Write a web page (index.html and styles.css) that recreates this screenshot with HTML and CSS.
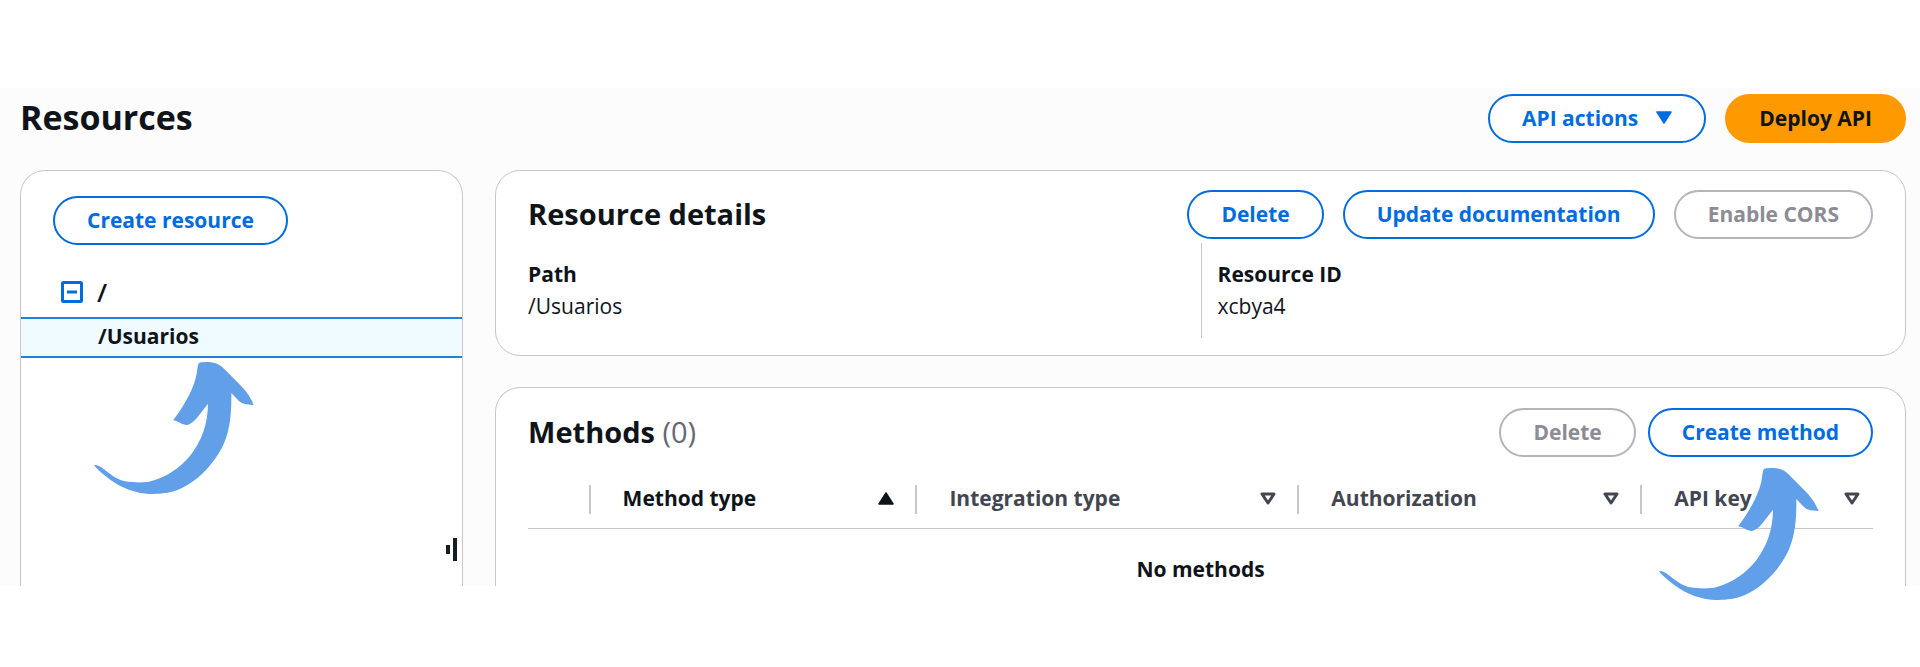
FILE: index.html
```html
<!DOCTYPE html>
<html lang="en">
<head>
<meta charset="utf-8">
<title>Resources</title>
<link rel="stylesheet" href="styles.css">
</head>
<body>
<svg class="defs" width="0" height="0" aria-hidden="true">
  <symbol id="arrow" viewBox="42 36 480 396">
    <path d="M356 40Q360 36 378 36C400 36 415 40 432 56L490 115Q511 139 521 165L497 163Q486 162 476 152L454 129C455 200 448 250 425 295C395 350 350 395 300 417C265 432 225 433 200 431C150 427 110 405 80 381Q50 358 42 346Q50 342 66 353C90 372 110 388 135 394C165 398 195 399 215 393C260 380 300 355 332 315C365 270 383 225 384 161L350 205Q335 222 321 225Q310 226 297 217Q288 212 280 211Q280 209 286 202C315 162 345 110 351 65Q353 47 356 40Z"/>
  </symbol>
  <symbol id="sort" viewBox="0 0 16 13">
    <path d="M2 2H14L8 11Z" fill="none" stroke="currentColor" stroke-width="3" stroke-linejoin="round"/>
  </symbol>
  <symbol id="caret" viewBox="0 0 16 13">
    <path d="M1 1H15L8 12Z" fill="currentColor" stroke="currentColor" stroke-width="1.5" stroke-linejoin="round"/>
  </symbol>
</svg>
<main class="console">
  <header class="bar">
    <h1 class="title">Resources</h1>
    <div class="actions">
      <button class="btn" type="button">API actions <svg class="caret"><use href="#caret"/></svg></button>
      <button class="btn primary" type="button">Deploy API</button>
    </div>
  </header>
  <div class="columns">
    <nav class="card open side" aria-label="Resources">
      <div class="side-head"><button class="btn" type="button">Create resource</button></div>
      <div class="node">
        <button class="toggle" type="button" aria-label="Collapse">
          <svg width="22" height="22" viewBox="0 0 22 22" fill="none" stroke="currentColor" stroke-width="3"><rect x="1.5" y="1.5" width="19" height="19" rx="1"/><path d="M6 11H16"/></svg>
        </button>
        <a class="link root" href="#root">/</a>
      </div>
      <div class="node selected">
        <a class="link" href="#usuarios">/Usuarios</a>
        <svg class="arrow arrow-node" aria-hidden="true"><use href="#arrow"/></svg>
      </div>
      <div class="grip"><svg width="11" height="23" viewBox="0 0 11 23" fill="#161d26"><rect y="7" width="4" height="9"/><rect x="7" width="4" height="23"/></svg></div>
    </nav>
    <div class="content">
      <section class="card details">
        <div class="card-head">
          <h2 class="heading">Resource details</h2>
          <div class="actions">
            <button class="btn" type="button">Delete</button>
            <button class="btn" type="button">Update documentation</button>
            <button class="btn" type="button" disabled>Enable CORS</button>
          </div>
        </div>
        <dl class="pairs">
          <div class="pair"><dt>Path</dt><dd>/Usuarios</dd></div>
          <div class="pair"><dt>Resource ID</dt><dd>xcbya4</dd></div>
        </dl>
      </section>
      <section class="card open methods">
        <div class="card-head">
          <h2 class="heading">Methods <span class="count">(0)</span></h2>
          <div class="actions tight">
            <button class="btn" type="button" disabled>Delete</button>
            <div class="marked">
              <button class="btn" type="button">Create method</button>
              <svg class="arrow arrow-method" aria-hidden="true"><use href="#arrow"/></svg>
            </div>
          </div>
        </div>
        <table class="table">
          <colgroup><col class="c-select"><col class="c-method"><col class="c-integration"><col class="c-auth"><col></colgroup>
          <thead>
            <tr>
              <td></td>
              <th scope="col"><button class="sort active" type="button">Method type <svg class="caret up"><use href="#caret"/></svg></button></th>
              <th scope="col"><button class="sort" type="button">Integration type <svg class="caret"><use href="#sort"/></svg></button></th>
              <th scope="col"><button class="sort" type="button">Authorization <svg class="caret"><use href="#sort"/></svg></button></th>
              <th scope="col"><button class="sort last" type="button">API key <svg class="caret"><use href="#sort"/></svg></button></th>
            </tr>
          </thead>
          <tbody><tr><td class="empty" colspan="5">No methods</td></tr></tbody>
        </table>
      </section>
    </div>
  </div>
</main>
</body>
</html>
```
FILE: styles.css
```css
* { box-sizing: border-box; }
body {
  margin: 0;
  min-height: 100vh;
  padding: 88px 0 81px;
  display: flex;
  flex-direction: column;
  background: #fff;
  color: #0f141a;
  font: 400 21px/32px "Open Sans", "Noto Sans", sans-serif;
}
.defs { position: absolute; }
.console {
  flex: 1;
  display: flex;
  flex-direction: column;
  padding: 6px 14px 0 20px;
  background: #fcfcfd;
}
.bar, .card-head { display: flex; align-items: center; justify-content: space-between; }
.title, .heading { margin: 0; padding-bottom: 2px; font-weight: 700; }
.title { font-size: 34px; line-height: 47px; }
.heading { font-size: 29px; line-height: 40px; }
.count { color: #656871; font-weight: 400; }
.actions { display: flex; gap: 19px; }
.tight { gap: 12px; }
.btn {
  display: flex;
  align-items: center;
  gap: 18px;
  height: 49px;
  padding: 0 32px 2px;
  border: 2px solid #006ce0;
  border-radius: 25px;
  background: #fff;
  color: #006ce0;
  font: 700 21px/32px "Open Sans", "Noto Sans", sans-serif;
  white-space: nowrap;
}
.btn:disabled { border-color: #b4b4bb; color: #8c8c94; }
.primary { border-color: #ff9900; background: #ff9900; color: #0f141a; }
.caret { width: 16px; height: 13px; flex: none; }
.up { transform: rotate(180deg); }
.columns { flex: 1; display: grid; grid-template-columns: 239fr 761fr; gap: 32px; margin-top: 27px; }
.card { border: 1px solid #c6c6cd; border-radius: 25px; background: #fff; }
.open { border-bottom: 0; border-radius: 25px 25px 0 0; }
.side { display: flex; flex-direction: column; }
.side-head { display: flex; padding: 25px 32px 25px; }
.node { position: relative; display: flex; align-items: center; gap: 14px; height: 47px; padding: 0 0 4px 40px; }
.toggle { display: flex; padding: 0; border: 0; background: none; color: #006ce0; }
.link { color: #0f141a; font-size: 21px; font-weight: 700; text-decoration: none; }
.root { font-size: 26px; font-weight: 600; }
.selected { height: 41px; padding: 0 0 4px 77px; border: solid #2080e0; border-width: 2px 0; background: #f0fbff; }
.arrow { position: absolute; z-index: 1; width: 160px; height: 132px; fill: #619fe9; pointer-events: none; }
.arrow-node { left: 73px; top: 43px; }
.grip { display: flex; justify-content: flex-end; margin-top: auto; padding: 0 5px 25px; }
.content { display: flex; flex-direction: column; gap: 31px; }
.details { padding: 19px 32px 17px; }
.pairs { display: grid; grid-template-columns: 1fr 1fr; margin: 4px 0 0; }
.pair { padding: 15px 0 16px; }
.pair + .pair { padding-left: 16px; border-left: 1px solid #c6c6cd; }
dt { font-weight: 700; }
dd { margin: 0; }
.methods { flex: 1; padding: 20px 32px 0; }
.marked { position: relative; }
.arrow-method { right: 54px; top: 60px; }
.table { width: 100%; margin-top: 14px; border-collapse: collapse; table-layout: fixed; }
.table td, .table th { padding: 0; }
.table thead td, .table thead th { height: 57px; border-bottom: 1px solid #c6c6cd; }
.c-select { width: 4.5%; }
.c-method { width: 24.3%; }
.c-integration { width: 28.4%; }
.c-auth { width: 25.5%; }
.sort {
  display: flex;
  align-items: center;
  justify-content: space-between;
  width: 100%;
  height: 29px;
  padding: 0 21px 2px 32px;
  border: 0;
  border-left: 2px solid #c6c6cd;
  background: none;
  color: #424650;
  font: 700 21px/27px "Open Sans", "Noto Sans", sans-serif;
}
.active { color: #0f141a; }
.last { padding-right: 13px; }
.table .empty { padding-top: 24px; text-align: center; font-weight: 700; }
```
